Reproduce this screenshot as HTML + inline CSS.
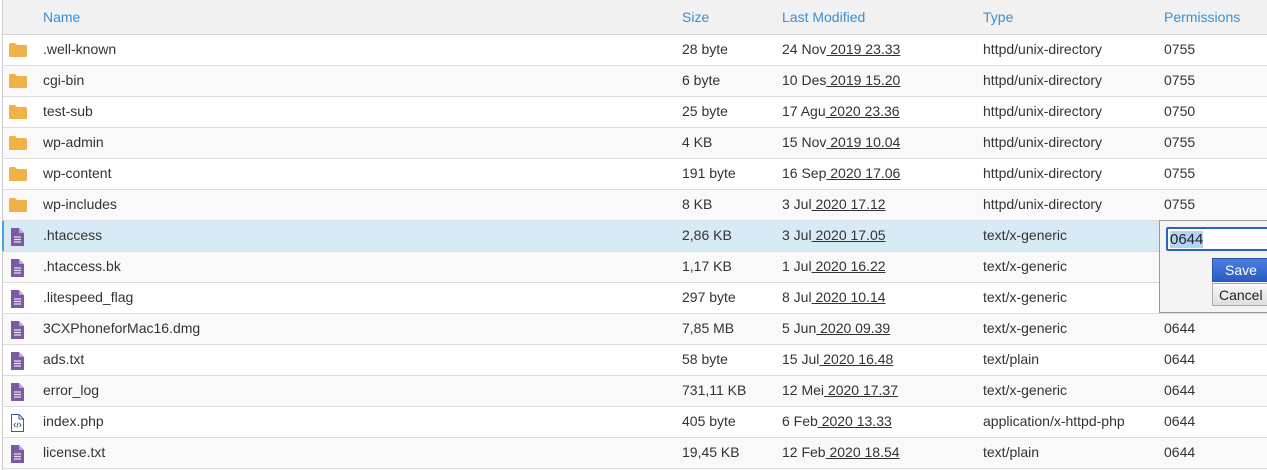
<!DOCTYPE html>
<html><head><style>
body{margin:0;width:1267px;height:470px;overflow:hidden;background:#fff;font-family:"Liberation Sans",Arial,sans-serif;font-size:14px;color:#333;position:relative}
.lb{position:absolute;left:2px;top:0;width:1px;height:470px;background:#ccc}
.hdr{position:absolute;left:3px;top:0;width:1264px;height:34px;background:#f1f1f1;border-bottom:1px solid #d5d5d5;color:#3b8ed3}
.row{position:absolute;left:3px;width:1264px;height:30px;border-bottom:1px solid #dcdcdc}
.c{position:absolute;top:0;line-height:29px;white-space:nowrap}
.hdr .c{line-height:34px;top:0}
.u{text-decoration:underline}
.ic{position:absolute;left:5px;top:7px}
.sel{background:#d9eaf7}
.sel::before{content:"";position:absolute;left:-1px;top:0;width:2px;height:30px;background:#4aa3df}
</style></head><body>
<div class="lb"></div>
<div class="hdr"><span class="c" style="left:40px">Name</span><span class="c" style="left:679px">Size</span><span class="c" style="left:779px">Last Modified</span><span class="c" style="left:980px">Type</span><span class="c" style="left:1161px">Permissions</span></div>
<div id="rows"></div>
<div style="position:absolute;left:1159px;top:220px;width:110px;height:93px;background:#f4f4f4;border:1px solid #999;box-sizing:border-box"></div>
<div style="position:absolute;left:1166px;top:227px;width:103px;height:24px;border:2px solid #2a62c9;border-radius:2px;background:#fff;box-sizing:border-box"><span style="position:absolute;left:2px;top:2px;background:#b5d4f5;font-size:15px;line-height:17px;color:#222">0644</span></div>
<div style="position:absolute;left:1212px;top:258px;width:60px;height:24px;background:linear-gradient(#4c7fe0,#2a5cc5);color:#fff;font-size:14px;line-height:22px;padding-left:12px;box-sizing:border-box;border:1px solid #2a55b0">Save</div>
<div style="position:absolute;left:1212px;top:283px;width:60px;height:23px;background:linear-gradient(#fafafa,#dedede);color:#222;font-size:14px;line-height:22px;padding-left:6px;box-sizing:border-box;border:1px solid #aaa">Cancel</div>
<script>
var d=[["d",".well-known","28 byte","24 Nov","2019 23.33","httpd/unix-directory","0755"],
["d","cgi-bin","6 byte","10 Des","2019 15.20","httpd/unix-directory","0755"],
["d","test-sub","25 byte","17 Agu","2020 23.36","httpd/unix-directory","0750"],
["d","wp-admin","4 KB","15 Nov","2019 10.04","httpd/unix-directory","0755"],
["d","wp-content","191 byte","16 Sep","2020 17.06","httpd/unix-directory","0755"],
["d","wp-includes","8 KB","3 Jul","2020 17.12","httpd/unix-directory","0755"],
["f",".htaccess","2,86 KB","3 Jul","2020 17.05","text/x-generic",""],
["f",".htaccess.bk","1,17 KB","1 Jul","2020 16.22","text/x-generic",""],
["f",".litespeed_flag","297 byte","8 Jul","2020 10.14","text/x-generic",""],
["f","3CXPhoneforMac16.dmg","7,85 MB","5 Jun","2020 09.39","text/x-generic","0644"],
["f","ads.txt","58 byte","15 Jul","2020 16.48","text/plain","0644"],
["f","error_log","731,11 KB","12 Mei","2020 17.37","text/x-generic","0644"],
["p","index.php","405 byte","6 Feb","2020 13.33","application/x-httpd-php","0644"],
["f","license.txt","19,45 KB","12 Feb","2020 18.54","text/plain","0644"]];
var folder='<svg class="ic" width="20" height="16" viewBox="0 0 20 16"><path d="M1 2.5Q1 1 2.5 1H7L9 3H17.5Q19 3 19 4.5V14Q19 15 18 15H2Q1 15 1 14Z" fill="#f0b04a"/></svg>';
var file='<svg class="ic" width="20" height="18" viewBox="0 0 20 18"><path d="M3 0H11L16 5V18H3Z" fill="#7a5aa0"/><path d="M11 0V5H16" fill="#b9a6cf"/><path d="M6 9H13M6 11.5H13M6 14H13" stroke="#e6ddf0" stroke-width="1.2"/></svg>';
var php='<svg class="ic" width="20" height="18" viewBox="0 0 20 18"><path d="M3.5 0.5H11L15.5 5V17.5H3.5Z" fill="#fff" stroke="#3d5a9a"/><path d="M11 0.5V5H15.5" fill="none" stroke="#3d5a9a"/><path d="M7.5 9L6 11L7.5 13M11.5 9L13 11L11.5 13M10 8.5L9 13.5" fill="none" stroke="#3d5a9a" stroke-width="1"/></svg>';
var h='';
d.forEach(function(r,i){
var cls='row'+(i==6?' sel':'');var bg=i==6?'':(i%2?'background:#f9f9f9;':'');
h+='<div class="'+cls+'" style="top:'+(35+i*31)+'px;'+bg+'">'+(r[0]=='d'?folder:r[0]=='p'?php:file)+
'<span class="c" style="left:40px">'+r[1]+'</span><span class="c" style="left:679px">'+r[2]+'</span><span class="c" style="left:779px">'+r[3]+'<span class="u"> '+r[4]+'</span></span><span class="c" style="left:980px">'+r[5]+'</span><span class="c" style="left:1161px">'+r[6]+'</span></div>';});
document.getElementById('rows').innerHTML=h;
</script>
</body></html>
